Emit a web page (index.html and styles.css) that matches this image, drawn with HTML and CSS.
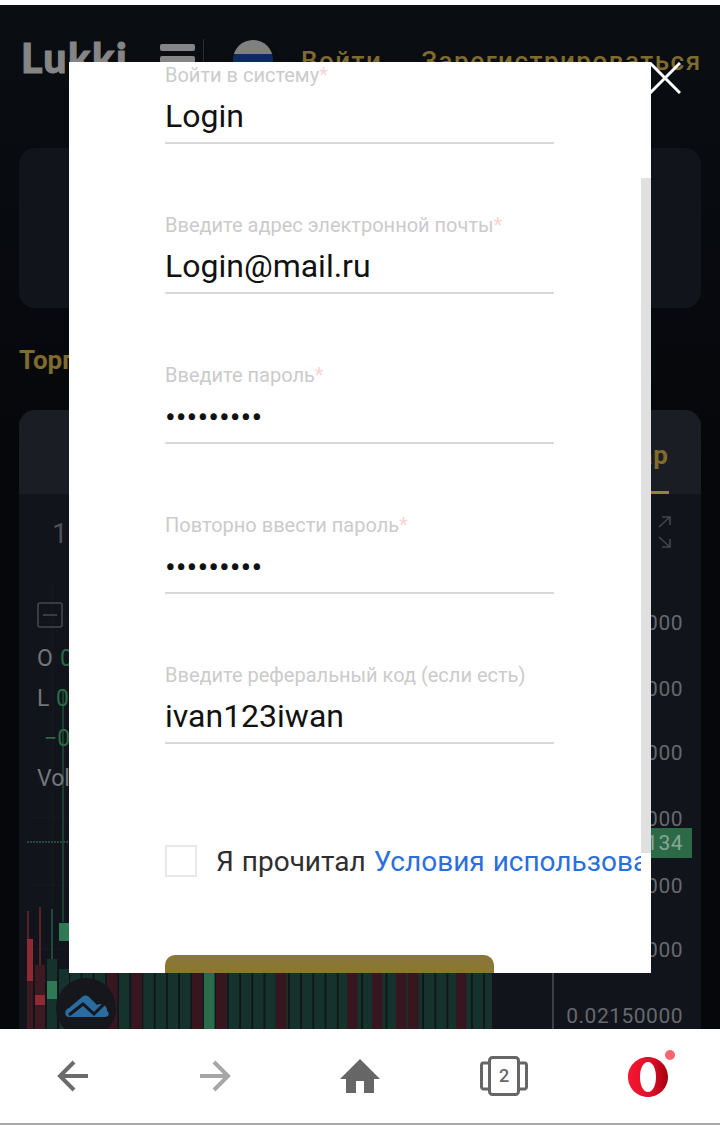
FILE: index.html
```html
<!DOCTYPE html>
<html lang="ru">
<head>
<meta charset="utf-8">
<title>Lukki</title>
<link rel="stylesheet" href="styles.css">
</head>
<body>
<div class="stage">
  <main class="page">
    <header class="topbar">
      <span class="logo">Lukki</span>
      <span class="burger"><i></i><i></i><i></i></span>
      <span class="divider"></span>
      <span class="flag"></span>
      <a class="toplink login-link">Войти</a>
      <a class="toplink">Зарегистрироваться</a>
    </header>
    <section class="card card-top"></section>
    <h2 class="section-title">Торговля</h2>
    <section class="card card-chart">
      <div class="tabs"><span class="tab-active">Бар</span></div>
      <svg class="chart" viewBox="19 494 682 535" width="682" height="535">
        <defs>
          <pattern id="bars" patternUnits="userSpaceOnUse" x="70.2" y="0" width="12.2" height="100">
            <rect x="0" y="0" width="10.4" height="100" fill="#15332c"/>
          </pattern>
        </defs>
        <!-- grid -->
        <g stroke="#171a20" stroke-width="1">
          <line x1="28" y1="622" x2="552" y2="622"/>
          <line x1="28" y1="688" x2="552" y2="688"/>
          <line x1="28" y1="752" x2="552" y2="752"/>
          <line x1="28" y1="818" x2="552" y2="818"/>
          <line x1="28" y1="885" x2="552" y2="885"/>
          <line x1="28" y1="949" x2="552" y2="949"/>
          <line x1="53" y1="580" x2="53" y2="905"/>
        </g>
        <line x1="63" y1="690" x2="63" y2="922" stroke="#1a3d30" stroke-width="2"/>
        <line x1="27" y1="842" x2="70" y2="842" stroke="#24483a" stroke-width="2" stroke-dasharray="2 1"/>
        <line x1="553" y1="973" x2="553" y2="1029" stroke="#4d5056" stroke-width="1.5"/>
        <!-- candles -->
        <line x1="28" y1="911" x2="28" y2="1029" stroke="#5b2128" stroke-width="2"/>
        <rect x="27" y="939" width="6" height="42" fill="#8f2a35"/>
        <rect x="27" y="981" width="6" height="48" fill="#3b1a22"/>
        <line x1="40" y1="907" x2="40" y2="1029" stroke="#5b2128" stroke-width="2"/>
        <rect x="35" y="965" width="10" height="64" fill="#3b1a22"/>
        <rect x="35" y="995" width="10" height="10" fill="#8f2a35"/>
        <line x1="52" y1="909" x2="52" y2="1029" stroke="#1f4a38" stroke-width="2"/>
        <rect x="47" y="959" width="10" height="70" fill="#15332c"/>
        <rect x="47" y="981" width="10" height="18" fill="#2f7a54"/>
        <rect x="59" y="923" width="10" height="18" fill="#2f7a54"/>
        <rect x="59" y="969" width="10" height="60" fill="#15332c"/>
        <!-- volume bars -->
        <rect x="70" y="960" width="422" height="69" fill="url(#bars)"/>
        <g fill="#37161f">
          <rect x="107" y="960" width="10.4" height="69"/>
          <rect x="131.4" y="960" width="10.4" height="69"/>
          <rect x="192" y="960" width="10.4" height="69"/>
          <rect x="216" y="960" width="10.4" height="69"/>
          <rect x="276" y="960" width="10.4" height="69"/>
          <rect x="347" y="960" width="10.4" height="69"/>
          <rect x="372" y="960" width="10.4" height="69"/>
          <rect x="396" y="960" width="10.4" height="69"/>
          <rect x="408" y="960" width="10.4" height="69"/>
          <rect x="456" y="960" width="10.4" height="69"/>
        </g>
        <rect x="204" y="960" width="10.4" height="69" fill="#2a6b4a"/>
        <!-- toolbar and legend -->
        <text class="t-tool" x="52" y="543">1</text>
        <g fill="none" stroke="#43474f" stroke-width="1.6">
          <path d="M659 527 L670 517 M662 517 H670 V525"/>
          <path d="M659 537 L670 547 M662 547 H670 V539"/>
          <rect x="38" y="603" width="24" height="24" rx="2"/>
          <path d="M43 615 H57"/>
        </g>
        <text class="t-legend" x="37" y="666">O</text>
        <text class="t-legend t-green" x="60" y="666">0</text>
        <text class="t-legend" x="37" y="706">L</text>
        <text class="t-legend t-green" x="56" y="706">0</text>
        <text class="t-legend t-green" x="44" y="746">−0</text>
        <text class="t-legend" x="37" y="786">Vol</text>
        <!-- axis -->
        <g class="t-axis">
          <text x="683" y="630">0.02450000</text>
          <text x="683" y="696">0.02400000</text>
          <text x="683" y="760">0.02350000</text>
          <text x="683" y="826">0.02300000</text>
          <text x="683" y="893">0.02250000</text>
          <text x="683" y="957">0.02200000</text>
          <text x="683" y="1023">0.02150000</text>
        </g>
        <rect x="600" y="828" width="92" height="30" fill="#2c6a47"/>
        <text class="t-tag" x="683" y="850">0.02134</text>
      </svg>
    </section>
  </main>

  <span class="tv-badge">
    <svg viewBox="0 0 60 60" width="60" height="60">
      <path d="M13 39 C8 39 8 31 13 30 L26 19 C28 17 31 17 33 19 L41 27 C45 24 52 28 51 33 C54 35 53 39 49 39 Z" fill="#2a6c9f"/>
      <path d="M13 37 L27 26 L38 36 L50 24" fill="none" stroke="#15171d" stroke-width="3"/>
    </svg>
  </span>

  <div class="modal">
    <div class="modal-scroll">
      <form class="form">
        <div class="field">
          <div class="field-label">Войти в систему<em>*</em></div>
          <div class="field-value">Login</div>
        </div>
        <div class="field">
          <div class="field-label">Введите адрес электронной почты<em>*</em></div>
          <div class="field-value">Login@mail.ru</div>
        </div>
        <div class="field">
          <div class="field-label">Введите пароль<em>*</em></div>
          <div class="field-value dots">•••••••••</div>
        </div>
        <div class="field">
          <div class="field-label">Повторно ввести пароль<em>*</em></div>
          <div class="field-value dots">•••••••••</div>
        </div>
        <div class="field">
          <div class="field-label">Введите реферальный код (если есть)</div>
          <div class="field-value">ivan123iwan</div>
        </div>
        <div class="agree">
          <span class="checkbox"></span>
          <span class="agree-text">Я прочитал <a class="agree-link">Условия использования</a></span>
        </div>
        <div class="submit"></div>
      </form>
    </div>
    <span class="scrollbar"></span>
  </div>

  <svg class="close" viewBox="0 0 32 32" width="32" height="32">
    <path d="M1 1 L31 31 M31 1 L1 31" stroke="#fff" stroke-width="3" fill="none"/>
  </svg>
</div>

<nav class="browser-nav">
  <span class="nav-item">
    <svg viewBox="0 0 36 34" width="36" height="34"><path d="M34 17 H6 M20 3 L6 17 L20 31" fill="none" stroke="#6b6b6b" stroke-width="4"/></svg>
  </span>
  <span class="nav-item">
    <svg viewBox="0 0 36 34" width="36" height="34"><path d="M2 17 H30 M16 3 L30 17 L16 31" fill="none" stroke="#a6a6a6" stroke-width="4"/></svg>
  </span>
  <span class="nav-item">
    <svg viewBox="0 0 40 36" width="40" height="36"><path d="M20 1 L40 21 H34 V35 H24 V23 H16 V35 H6 V21 H0 Z" fill="#666"/></svg>
  </span>
  <span class="nav-item tabs-btn">
    <svg viewBox="0 0 48 40" width="48" height="40">
      <rect x="9.5" y="1.5" width="29" height="37" rx="3" fill="none" stroke="#666" stroke-width="3"/>
      <path d="M9 7 H3 A2 2 0 0 0 1.500 9 V31 A2 2 0 0 0 3 33 H9 M39 7 H45 A2 2 0 0 1 46.500 9 V31 A2 2 0 0 1 45 33 H39" fill="none" stroke="#666" stroke-width="3"/>
    </svg>
    <span class="tabs-count">2</span>
  </span>
  <span class="nav-item opera">
    <svg viewBox="0 0 52 50" width="52" height="50">
      <defs>
        <linearGradient id="op" x1="0" x2="1" y1="0" y2="0">
          <stop offset="0" stop-color="#f5172f"/>
          <stop offset="0.55" stop-color="#e0102a"/>
          <stop offset="1" stop-color="#a3000f"/>
        </linearGradient>
      </defs>
      <path fill-rule="evenodd" d="M20 5 C31 5 40 14 40 25 C40 36 31 45 20 45 C9 45 0 36 0 25 C0 14 9 5 20 5 Z M20 10 C15 10 12 17 12 25 C12 33 15 40 20 40 C25 40 28 33 28 25 C28 17 25 10 20 10 Z" fill="url(#op)"/>
      <circle cx="42" cy="3" r="5" fill="#f7666e"/>
    </svg>
  </span>
</nav>
</body>
</html>
```
FILE: styles.css
```css
* { box-sizing: border-box; }
html, body { margin: 0; padding: 0; }
body {
  width: 720px;
  height: 1125px;
  padding-top: 5px;
  background: #fff;
  overflow: hidden;
  font-family: Roboto, "Liberation Sans", sans-serif;
}
.stage {
  position: relative;
  width: 720px;
  height: 1024px;
  overflow: hidden;
  background: linear-gradient(#0a0d12, #05070b 45%);
}
.page {
  display: flex;
  flex-direction: column;
  padding: 0 19px;
}
.topbar {
  display: flex;
  align-items: center;
  height: 143px;
  padding: 0 0 34px 2px;
  white-space: nowrap;
  margin-right: -19px;
}
.logo {
  width: 139px;
  margin-top: -5px;
  font: 900 41px/1 Lato, sans-serif;
  letter-spacing: 1.6px;
  -webkit-text-stroke: 1px #858585;
  color: #858585;
}
.burger {
  display: flex;
  flex-direction: column;
  gap: 5px;
  width: 35px;
}
.burger i {
  display: block;
  height: 7px;
  border-radius: 2px;
  background: #858585;
}
.divider {
  width: 1px;
  height: 42px;
  margin: 0 29px 0 8px;
  background: #2a2c30;
}
.flag {
  width: 40px;
  height: 40px;
  margin-right: 28px;
  border-radius: 50%;
  background: linear-gradient(#808080 34%, #0c2a5c 34%);
}
.toplink {
  font-size: 26px;
  font-weight: 500;
  line-height: 40px;
  margin-top: 3px;
  color: #7f6b2e;
  letter-spacing: 1.5px;
}
.login-link { margin-right: 39px; }
.card {
  border-radius: 16px;
  background: #11141a;
}
.card-top { height: 160px; }
.section-title {
  margin: 0;
  height: 102px;
  padding-top: 37px;
  font: 700 26px/30px Roboto, sans-serif;
  color: #7f6b2e;
}
.card-chart { height: 700px; overflow: hidden; }
.tabs {
  display: flex;
  justify-content: flex-end;
  height: 84px;
  padding-right: 32px;
  background: #1a1d23;
}
.tab-active {
  height: 84px;
  padding: 26px 0 0 0;
  width: 64px;
  text-align: right;
  font-size: 26px;
  font-weight: 700;
  line-height: 38px;
  letter-spacing: 1px;
  color: #7f6b2e;
  border-bottom: 3px solid #9a8234;
}
.chart { display: block; }
.t-tool { font: 400 28px Roboto, sans-serif; fill: #4d5056; }
.t-legend { font: 400 23px Roboto, sans-serif; fill: #74767a; }
.t-green { fill: #2c6a47; }
.t-axis text { font: 400 21px Roboto, sans-serif; fill: #66696e; text-anchor: end; letter-spacing: 0.5px; }
.t-tag { font: 400 21px Roboto, sans-serif; fill: #85a896; text-anchor: end; letter-spacing: 0.5px; }
.tv-badge {
  position: absolute;
  left: 56px;
  top: 973px;
  display: flex;
  align-items: center;
  justify-content: center;
  width: 60px;
  height: 60px;
  border-radius: 50%;
  background: #15171d;
}
.modal {
  position: absolute;
  left: 69px;
  top: 57px;
  width: 582px;
  height: 911px;
  background: #fff;
  overflow: hidden;
}
.modal-scroll {
  width: 572px;
  height: 911px;
  overflow: hidden;
}
.form { padding: 0 0 0 96px; }
.field {
  width: 389px;
  height: 150px;
}
.field-label {
  height: 26px;
  font-size: 20px;
  line-height: 26px;
  color: #cbcbcb;
  white-space: nowrap;
}
.field-label em {
  font-style: normal;
  color: #f7d4d4;
}
.field-value {
  height: 56px;
  padding-top: 6px;
  font-size: 32px;
  line-height: 44px;
  color: #111;
  border-bottom: 2px solid #d9d9d9;
}
.dots { padding-top: 7px; }
.agree {
  display: flex;
  align-items: center;
  gap: 19px;
  width: 476px;
  height: 32px;
  margin-top: 33px;
  white-space: nowrap;
}
.checkbox {
  flex: none;
  width: 32px;
  height: 32px;
  border: 2px solid #e8e8e8;
}
.agree-text {
  position: relative;
  top: 1px;
  font-size: 28px;
  line-height: 32px;
  word-spacing: 1px;
  color: #2e2e2e;
}
.agree-link { color: #2a6ee0; }
.submit {
  width: 329px;
  height: 60px;
  margin-top: 78px;
  border-radius: 10px;
  background: #8a7635;
}
.scrollbar {
  position: absolute;
  right: 0;
  top: 116px;
  width: 10px;
  height: 675px;
  background: #e0e0e0;
}
.close {
  position: absolute;
  left: 649px;
  top: 57px;
}
.browser-nav {
  display: grid;
  grid-template-columns: repeat(5, 144px);
  height: 96px;
  border-bottom: 2px solid #aaa;
  background: #fff;
}
.nav-item {
  position: relative;
  display: flex;
  align-items: center;
  justify-content: center;
  height: 94px;
}
.tabs-count {
  position: absolute;
  left: 0;
  right: 0;
  top: 36px;
  text-align: center;
  font-size: 18px;
  line-height: 22px;
  font-weight: 500;
  color: #666;
}
.opera svg { margin-left: 12px; margin-top: 2px; overflow: visible; }
```
